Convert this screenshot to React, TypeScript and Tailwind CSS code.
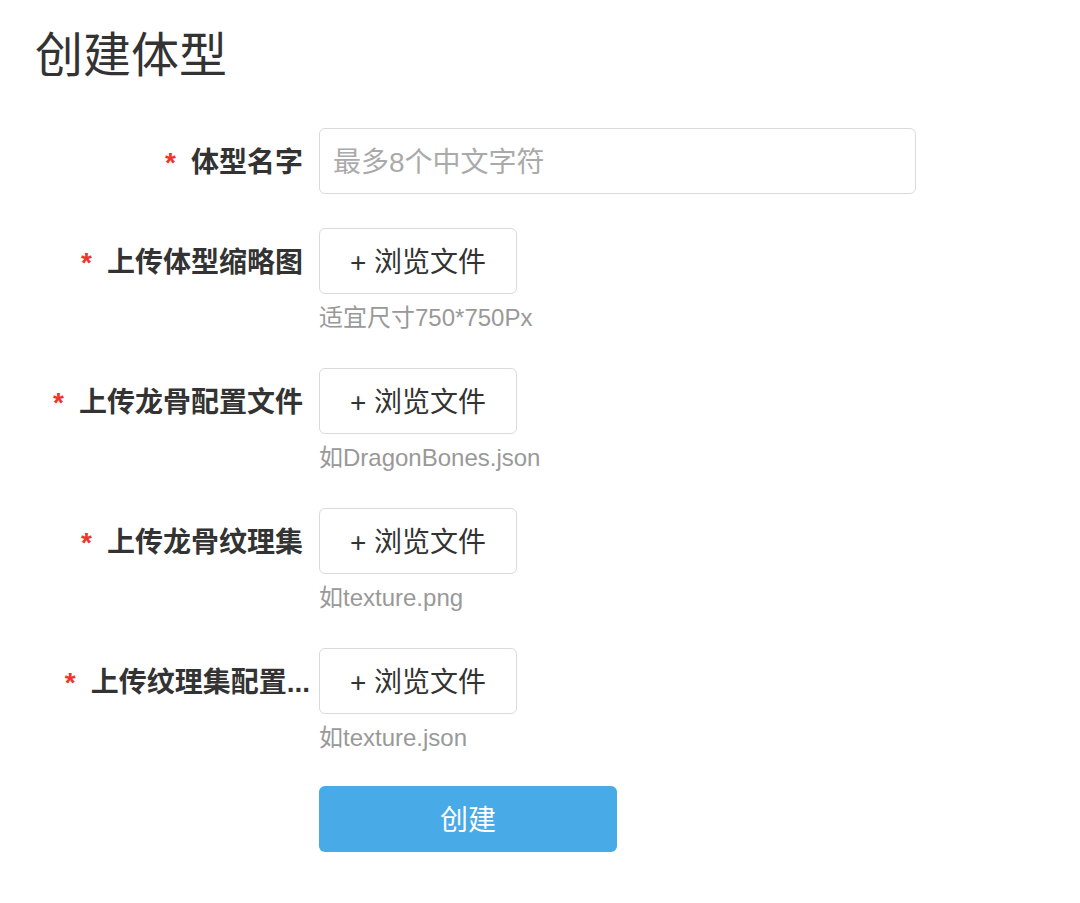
import React from "react";

const font = { fontFamily: '"Liberation Sans", "Noto Sans CJK SC", sans-serif' };

function Label({ text, pull }: { text: string; pull?: boolean }) {
  return (
    <div className="w-[268px] shrink-0 flex items-center justify-end whitespace-nowrap pt-[4px]">
      <span className="text-[28px] font-bold text-[#f0352b] mr-[15px] leading-none">*</span>
      <span className={"text-[28px] font-bold text-[#333333] leading-none" + (pull ? " -mr-[7px]" : "")}>{text}</span>
    </div>
  );
}

function FileRow({ label, hint, pull }: { label: string; hint: string; pull?: boolean }) {
  return (
    <div className="flex mt-[34px]">
      <div className="flex h-[66px] items-center">
        <Label text={label} pull={pull} />
      </div>
      <div className="ml-[16px] flex flex-col">
        <button className="w-[198px] h-[66px] border border-[#dadada] rounded-[6px] bg-white text-[28px] text-[#333333] flex items-center justify-center pt-[3px]">
          + 浏览文件
        </button>
        <div className="mt-[8px] leading-[32px] text-[24px] text-[#999999]">{hint}</div>
      </div>
    </div>
  );
}

export default function App() {
  return (
    <div className="min-h-[903px] w-[1080px] bg-white pl-[35px] pt-[28px]" style={font}>
      <h1 className="text-[48px] leading-[56px] font-normal text-[#333333]">创建体型</h1>
      <div className="mt-[44px] flex">
        <div className="flex h-[66px] items-center">
          <Label text="体型名字" />
        </div>
        <div className="ml-[16px] w-[597px] h-[66px] border border-[#dadada] rounded-[6px] flex items-center pl-[13px] pt-[4px]">
          <span className="text-[28px] text-[#aaaaaa]">最多8个中文字符</span>
        </div>
      </div>
      <FileRow label="上传体型缩略图" hint="适宜尺寸750*750Px" />
      <FileRow label="上传龙骨配置文件" hint="如DragonBones.json" />
      <FileRow label="上传龙骨纹理集" hint="如texture.png" />
      <FileRow label="上传纹理集配置..." hint="如texture.json" pull />
      <div className="ml-[284px] mt-[32px]">
        <button className="w-[298px] h-[66px] rounded-[6px] bg-[#49aae8] text-white text-[28px] flex items-center justify-center pt-[3px]">
          创建
        </button>
      </div>
    </div>
  );
}
